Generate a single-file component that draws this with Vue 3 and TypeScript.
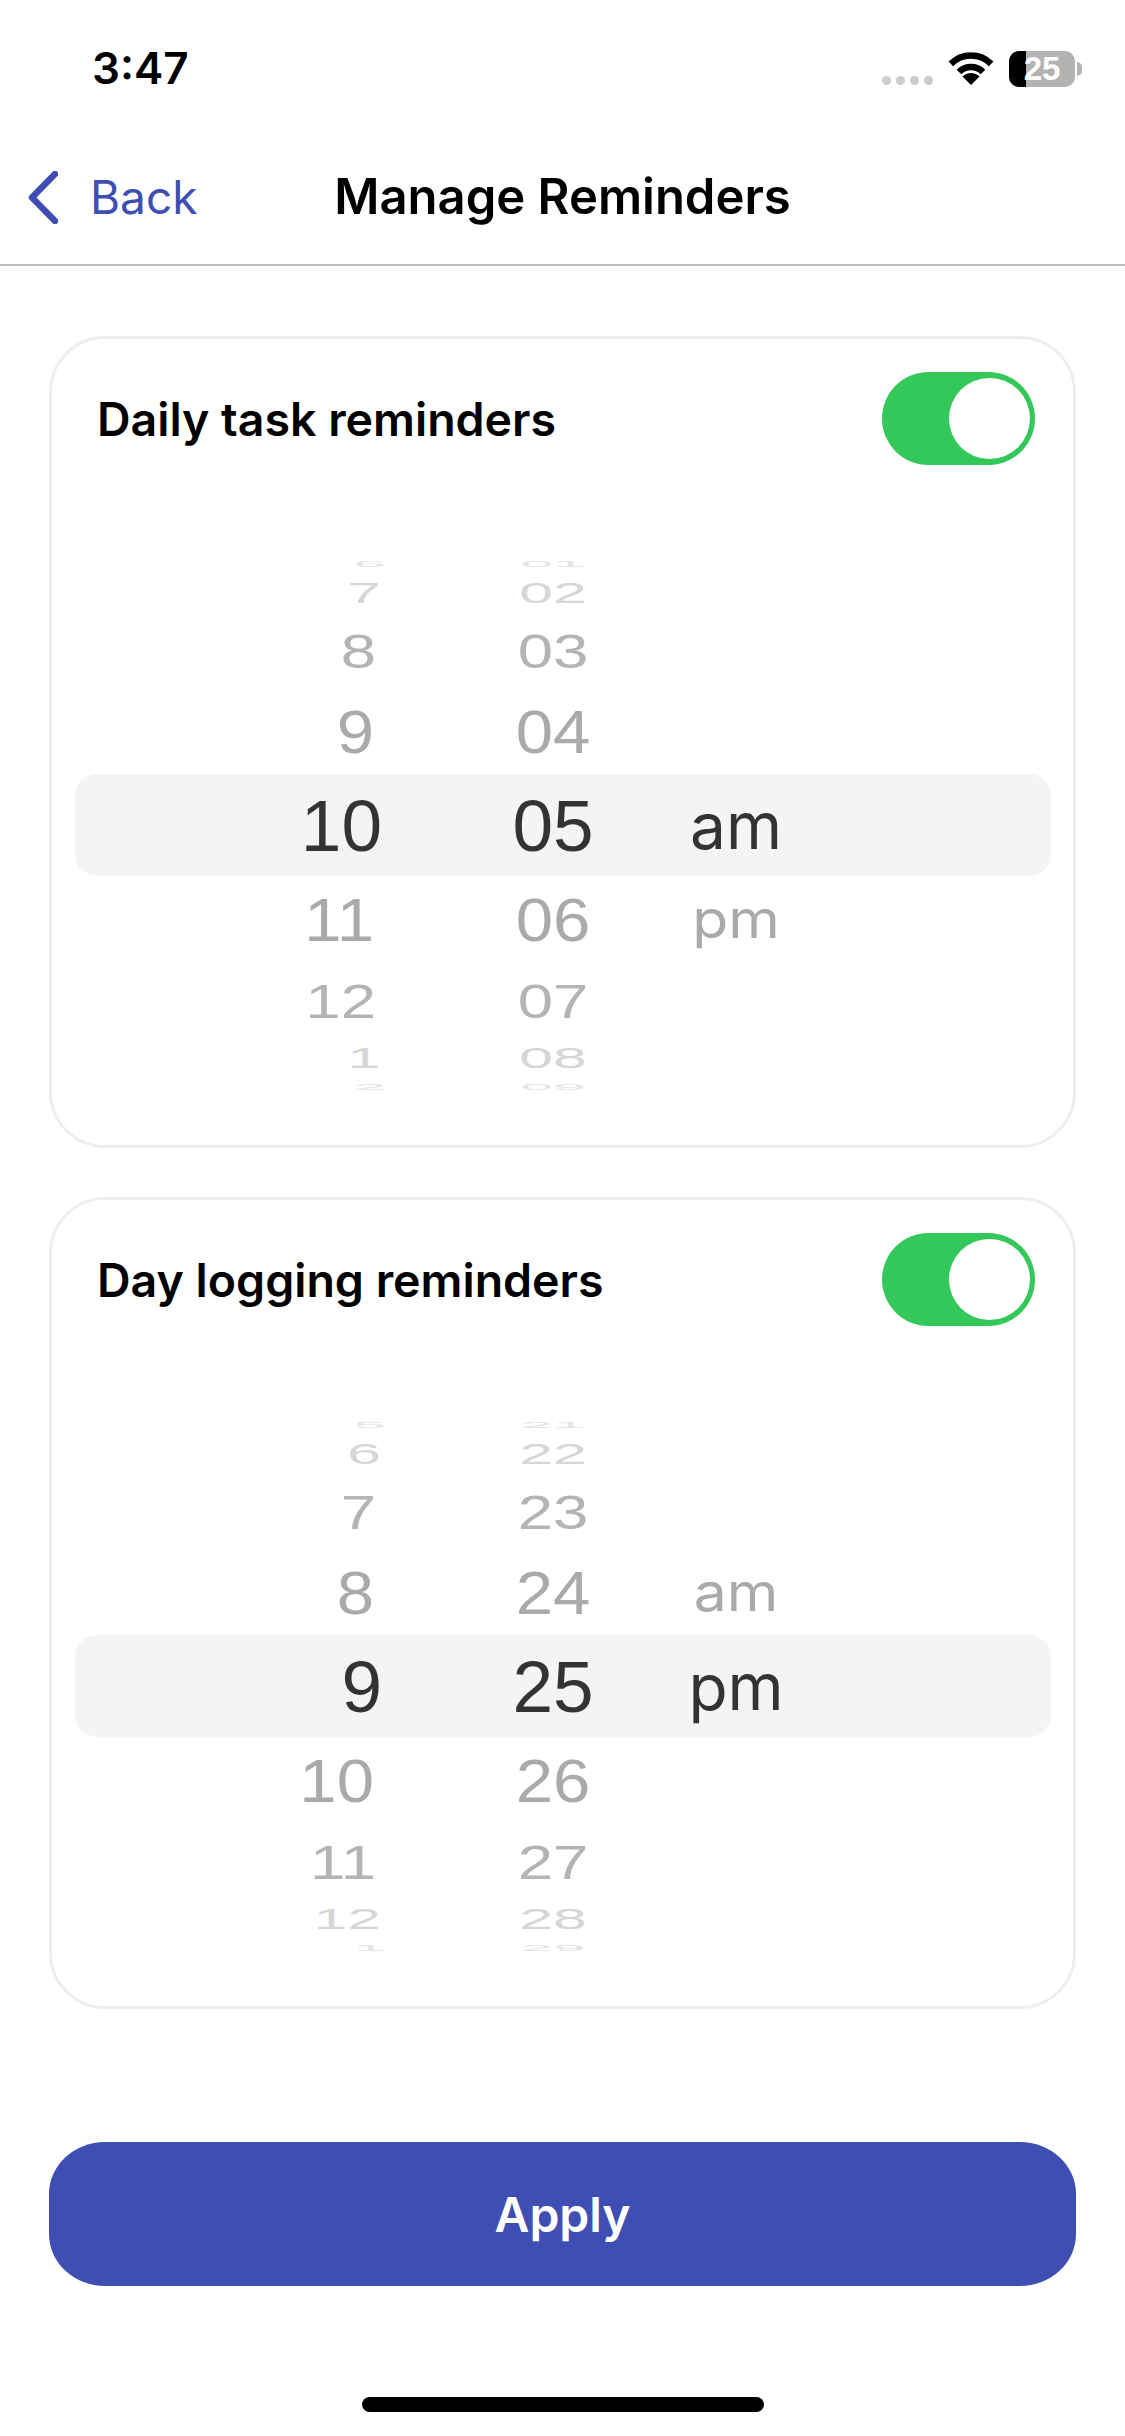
<template>
  <div class="screen">
    <!-- Status bar -->
    <div class="status-bar">
      <span class="time">3:47</span>
      <div class="status-icons">
        <div class="signal">
          <i v-for="n in 4" :key="n" />
        </div>
        <svg class="wifi" width="46" height="33" viewBox="0 0 46 33">
          <path d="M2.85 11.85A28.5 28.5 0 0 1 43.15 11.85" fill="none" stroke="#000" stroke-width="6.5" />
          <path d="M11 20A17 17 0 0 1 35 20" fill="none" stroke="#000" stroke-width="6.5" />
          <path d="M23 33L14.5 24.5A12 12 0 0 1 31.5 24.5Z" fill="#000" />
        </svg>
        <div class="battery">
          <div class="battery-body">
            <div class="battery-fill" />
            <span class="battery-text">25</span>
          </div>
          <div class="battery-nub" />
        </div>
      </div>
    </div>

    <!-- Nav -->
    <header class="nav">
      <a class="back">
        <svg width="30" height="53" viewBox="0 0 30 53">
          <path d="M27 3L4 26.5L27 50" fill="none" stroke="#3f4eb3" stroke-width="6.5" stroke-linecap="round" stroke-linejoin="round" />
        </svg>
        <span>Back</span>
      </a>
      <h1 class="title">Manage Reminders</h1>
    </header>

    <main class="content">
      <section v-for="card in cards" :key="card.label" class="card">
        <div class="card-head">
          <span class="card-label">{{ card.label }}</span>
          <div class="toggle"><div class="thumb" /></div>
        </div>
        <div class="picker">
          <div class="band" />
          <div class="wheel hours">
            <div v-for="(val, i) in card.hours" :key="i" class="cell" :style="cellStyle(i, rows[i].hx)">{{ val }}</div>
          </div>
          <div class="wheel minutes">
            <div v-for="(val, i) in card.minutes" :key="i" class="cell" :style="cellStyle(i, 0)">{{ val }}</div>
          </div>
          <div class="wheel meridiem">
            <div v-for="(val, i) in card.meridiem" :key="i" class="cell" :style="cellStyle(i, 0)">{{ val }}</div>
          </div>
        </div>
      </section>
    </main>

    <div class="footer">
      <button class="apply">Apply</button>
    </div>
    <div class="home-bar" />
  </div>
</template>

<script setup lang="ts">
interface Row {
  h: number
  sx: number
  sy: number
  hx: number
  color: string
}

// drum rows, top to bottom; the middle one sits on the band
const rows: Row[] = [
  { h: 10, sx: 0.8, sy: 0.12, hx: 4, color: '#e4e4e4' },
  { h: 48, sx: 0.83, sy: 0.4, hx: -1, color: '#d6d6d6' },
  { h: 68, sx: 0.87, sy: 0.66, hx: -6, color: '#b4b4b4' },
  { h: 92, sx: 0.92, sy: 0.84, hx: -8, color: '#aaaaaa' },
  { h: 97, sx: 1, sy: 1, hx: 0, color: '#333333' },
  { h: 90, sx: 0.92, sy: 0.84, hx: -8, color: '#aaaaaa' },
  { h: 74, sx: 0.87, sy: 0.66, hx: -6, color: '#b4b4b4' },
  { h: 40, sx: 0.83, sy: 0.4, hx: -1, color: '#d6d6d6' },
  { h: 18, sx: 0.8, sy: 0.12, hx: 4, color: '#e4e4e4' },
]

const cellStyle = (i: number, dx: number) => {
  const r = rows[i]
  return {
    height: r.h + 'px',
    color: r.color,
    transform: `translateX(${dx}px) scale(${r.sx}, ${r.sy})`,
  }
}

const cards = [
  {
    label: 'Daily task reminders',
    hours: ['6', '7', '8', '9', '10', '11', '12', '1', '2'],
    minutes: ['01', '02', '03', '04', '05', '06', '07', '08', '09'],
    meridiem: ['', '', '', '', 'am', 'pm', '', '', ''],
  },
  {
    label: 'Day logging reminders',
    hours: ['5', '6', '7', '8', '9', '10', '11', '12', '1'],
    minutes: ['21', '22', '23', '24', '25', '26', '27', '28', '29'],
    meridiem: ['', '', '', 'am', 'pm', '', '', '', ''],
  },
]
</script>

<style>
html, body { background: #fff; }
</style>

<style scoped>
.screen {
  width: 1125px;
  height: 2436px;
  background: #fff;
  display: flex;
  flex-direction: column;
  overflow: hidden;
  font-family: Inter, "Liberation Sans", sans-serif;
  color: #000;
}

/* Status bar */
.status-bar {
  height: 110px;
  box-sizing: border-box;
  padding: 44px 43px 0 92px;
  display: flex;
  justify-content: space-between;
  align-items: flex-start;
}
.time {
  font-size: 44px;
  font-weight: 600;
  line-height: 48px;
}
.status-icons {
  display: flex;
  align-items: flex-start;
  padding-top: 7px;
}
.signal {
  display: flex;
  gap: 5px;
  margin-top: 25px;
  margin-right: 15px;
}
.signal i {
  width: 9px;
  height: 9px;
  border-radius: 50%;
  background: #ccc;
}
.wifi { margin-top: 1px; margin-right: 15px; }
.battery { display: flex; align-items: center; gap: 2px; }
.battery-body {
  position: relative;
  width: 66px;
  height: 36px;
  border-radius: 10px;
  background: #b3b3b3;
  overflow: hidden;
  display: flex;
  align-items: center;
  justify-content: center;
}
.battery-fill {
  position: absolute;
  left: 0;
  top: 0;
  bottom: 0;
  width: 17px;
  background: #000;
}
.battery-text {
  position: relative;
  color: #fff;
  font-family: "Liberation Sans", sans-serif;
  font-size: 33px;
  font-weight: 700;
}
.battery-nub {
  width: 5px;
  height: 14px;
  background: #b3b3b3;
  border-radius: 0 5px 5px 0;
}

/* Nav */
.nav {
  height: 156px;
  box-sizing: border-box;
  border-bottom: 2px solid #bdbdbd;
  padding: 20px 28px 0;
  display: grid;
  grid-template-columns: 1fr auto 1fr;
  align-items: center;
}
.back {
  display: flex;
  align-items: center;
  gap: 32px;
  color: #3f4eb3;
  font-size: 46px;
  line-height: 54px;
}
.title {
  grid-column: 2;
  margin: 0;
  font-size: 49px;
  font-weight: 600;
  line-height: 54px;
}

/* Cards */
.content {
  padding: 70px 49px 0;
  display: flex;
  flex-direction: column;
  gap: 49px;
}
.card {
  height: 812px;
  box-sizing: border-box;
  border: 3px solid #eeeeee;
  border-radius: 56px;
  padding-top: 33px;
}
.card-head {
  display: flex;
  justify-content: space-between;
  align-items: center;
  padding: 0 38px 0 45px;
}
.card-label {
  font-size: 46.5px;
  font-weight: 600;
  line-height: 54px;
}
.toggle {
  width: 153px;
  height: 93px;
  box-sizing: border-box;
  padding: 6px 5px;
  border-radius: 47px;
  background: #34c759;
  display: flex;
  justify-content: flex-end;
}
.thumb {
  width: 81px;
  height: 81px;
  border-radius: 50%;
  background: #fff;
}

/* Picker */
.picker {
  position: relative;
  height: 530px;
  margin: 95px 22px 0 23px;
  overflow: hidden;
  display: flex;
  font-family: "Liberation Sans", sans-serif;
  font-size: 73px;
  line-height: 1;
}
.band {
  position: absolute;
  left: 0;
  right: 0;
  top: 214px;
  height: 102px;
  border-radius: 22px;
  background: #f4f4f4;
}
.wheel {
  position: relative;
  display: flex;
  flex-direction: column;
  margin-top: -1px;
}
.cell {
  flex-shrink: 0;
  display: flex;
  align-items: center;
  white-space: nowrap;
}
.hours { width: 307px; }
.hours .cell { justify-content: flex-end; transform-origin: right center; }
.minutes { width: 142px; margin-left: 100px; }
.minutes .cell { justify-content: center; }
.meridiem { width: 200px; margin-left: 12px; font-family: Inter, sans-serif; font-size: 64px; }
.meridiem .cell { justify-content: center; }

/* Footer */
.footer {
  padding: 133px 49px 0;
}
.apply {
  display: block;
  width: 100%;
  height: 144px;
  border: none;
  border-radius: 56px / 52px;
  background: #3f4eb3;
  color: #fff;
  font-family: Inter, "Liberation Sans", sans-serif;
  font-size: 48px;
  font-weight: 600;
}
.home-bar {
  width: 402px;
  height: 15px;
  margin: 111px auto 0;
  border-radius: 8px;
  background: #000;
}
</style>
